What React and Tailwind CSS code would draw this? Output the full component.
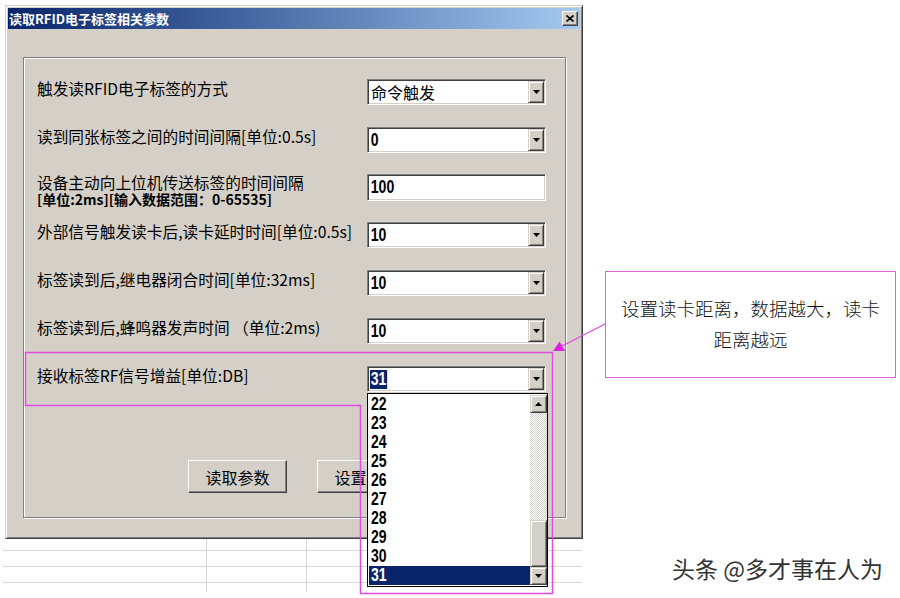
import React from "react";

const CJK = { fontFamily: '"Noto Sans CJK SC", "Noto Sans", sans-serif' };
const NUM = { fontFamily: '"Liberation Sans", Arial, sans-serif' };

function Num({ children, selected }) {
  return (
    <span
      className={
        "inline-block origin-left scale-x-[0.78] text-[18px] font-bold leading-[19px] px-[1px] " +
        (selected ? "bg-[#0a246a] text-white" : "text-black")
      }
      style={NUM}
    >
      {children}
    </span>
  );
}

function DropBtn() {
  return (
    <div className="w-[16px] h-[22px] bg-[#d4d0c8] border border-t-[#d4d0c8] border-l-[#d4d0c8] border-b-[#404040] border-r-[#404040] shadow-[inset_1px_1px_0_#fff,inset_-1px_-1px_0_#808080] flex items-center justify-center">
      <svg width="7" height="4" viewBox="0 0 7 4">
        <path d="M0 0H7L3.5 4Z" fill="#000" />
      </svg>
    </div>
  );
}

function Sunken({ children, tall }) {
  return (
    <div
      className={
        "w-[179px] bg-white border border-t-[#808080] border-l-[#808080] border-b-white border-r-white shadow-[inset_1px_1px_0_#404040,inset_-1px_-1px_0_#d4d0c8] flex items-center justify-between pl-[2px] pr-[1px] " +
        (tall ? "h-[27px]" : "h-[26px]")
      }
    >
      {children}
    </div>
  );
}

function Combo({ value, cjk, selected }) {
  return (
    <Sunken>
      {cjk ? (
        <span className="text-[16px] leading-[20px] text-black pl-[1px]" style={CJK}>
          {value}
        </span>
      ) : (
        <Num selected={selected}>{value}</Num>
      )}
      <DropBtn />
    </Sunken>
  );
}

function Label({ children }) {
  return (
    <div className="w-[330px] text-[15.7px] leading-[18px] text-black -mt-[6px] whitespace-nowrap" style={CJK}>
      {children}
    </div>
  );
}

function Button({ children }) {
  return (
    <div
      className="w-[99px] h-[33px] bg-[#d4d0c8] border border-t-white border-l-white border-b-[#404040] border-r-[#404040] shadow-[inset_-1px_-1px_0_#808080] flex items-center justify-center text-[16px] text-black"
      style={CJK}
    >
      {children}
    </div>
  );
}

export default function App() {
  const items = [22, 23, 24, 25, 26, 27, 28, 29, 30, 31];
  return (
    <div className="relative w-[900px] h-[598px] bg-white overflow-hidden">
      {/* Dialog window */}
      <div className="ml-[5px] mt-[5px] w-[578px] h-[534px] bg-[#d4d0c8] border border-t-[#d4d0c8] border-l-[#d4d0c8] border-b-[#404040] border-r-[#404040] shadow-[inset_1px_1px_0_#fff,inset_-1px_-1px_0_#808080] p-[2px] flex flex-col">
        {/* Title bar */}
        <div className="h-[21px] bg-gradient-to-r from-[#0a246a] to-[#a6caf0] flex items-center justify-between pl-[1px] pr-[2px]">
          <span className="text-[13px] font-bold text-white leading-[16px]" style={CJK}>
            读取RFID电子标签相关参数
          </span>
          <div className="w-[16px] h-[15px] bg-[#d4d0c8] border border-t-white border-l-white border-b-[#404040] border-r-[#404040] shadow-[inset_-1px_-1px_0_#808080] flex items-center justify-center">
            <svg width="8" height="7" viewBox="0 0 8 7">
              <path d="M0.5 0.5L7.5 6.5M7.5 0.5L0.5 6.5" stroke="#000" strokeWidth="1.7" />
            </svg>
          </div>
        </div>
        {/* Body */}
        <div className="pl-[15px] pt-[28px]">
          <div className="w-[543px] h-[461px] border border-[#808080] shadow-[inset_1px_1px_0_#fff,1px_1px_0_#fff] pl-[13px] pt-[21px] flex flex-col">
            <div className="flex items-center h-[26px]">
              <Label>触发读RFID电子标签的方式</Label>
              <Combo value="命令触发" cjk />
            </div>
            <div className="flex items-center h-[26px] mt-[22px]">
              <Label>读到同张标签之间的时间间隔[单位:0.5s]</Label>
              <Combo value="0" />
            </div>
            <div className="flex items-start h-[27px] mt-[21px]">
              <div className="w-[330px] text-black whitespace-nowrap" style={CJK}>
                <div className="text-[15.7px] leading-[17px]">设备主动向上位机传送标签的时间间隔</div>
                <div className="text-[14px] font-bold leading-[16px]">[单位:2ms][输入数据范围：0-65535]</div>
              </div>
              <Sunken tall>
                <Num>100</Num>
              </Sunken>
            </div>
            <div className="flex items-center h-[26px] mt-[21px]">
              <Label>外部信号触发读卡后,读卡延时时间[单位:0.5s]</Label>
              <Combo value="10" />
            </div>
            <div className="flex items-center h-[26px] mt-[22px]">
              <Label>标签读到后,继电器闭合时间[单位:32ms]</Label>
              <Combo value="10" />
            </div>
            <div className="flex items-center h-[26px] mt-[22px]">
              <Label>标签读到后,蜂鸣器发声时间 （单位:2ms)</Label>
              <Combo value="10" />
            </div>
            <div className="flex items-center h-[26px] mt-[22px]">
              <Label>接收标签RF信号增益[单位:DB]</Label>
              <Combo value="31" selected />
            </div>
            <div className="flex gap-[30px] mt-[68px] ml-[151px]">
              <Button>读取参数</Button>
              <Button>设置参数</Button>
            </div>
          </div>
        </div>
      </div>

      {/* spreadsheet grid below */}
      <div className="ml-[3px] w-[579px] grid grid-cols-[204px_100px_1fr]">
        {[12, 16, 16, 9].map((h, r) =>
          [0, 1, 2].map((c) => (
            <div
              key={r + "-" + c}
              className={
                (h === 12 ? "h-[12px] " : h === 16 ? "h-[16px] " : "h-[9px] ") +
                (r < 3 ? "border-b border-b-[#d6d6d6] " : "") +
                (c < 2 ? "border-r border-r-[#d6d6d6]" : "")
              }
            />
          ))
        )}
      </div>

      {/* Open dropdown list */}
      <div className="absolute left-[367px] top-[393px] w-[181px] h-[194px] bg-white border border-black flex">
        <div className="flex-1 pt-[1px] pl-[1px] flex flex-col">
          {items.map((n) => (
            <div
              key={n}
              className={"h-[19px] pl-[2px] flex items-center " + (n === 31 ? "bg-[#0a246a]" : "")}
            >
              <span
                className={
                  "inline-block origin-left scale-x-[0.78] text-[18px] font-bold leading-[19px] " +
                  (n === 31 ? "text-white" : "text-black")
                }
                style={NUM}
              >
                {n}
              </span>
            </div>
          ))}
        </div>
        <div className="w-[17px] flex flex-col pt-[1px] pb-[1px]">
          <div className="h-[18px] bg-[#d4d0c8] border border-t-[#d4d0c8] border-l-[#d4d0c8] border-b-[#404040] border-r-[#404040] shadow-[inset_1px_1px_0_#fff,inset_-1px_-1px_0_#808080] flex items-center justify-center">
            <svg width="7" height="4" viewBox="0 0 7 4">
              <path d="M0 4H7L3.5 0Z" fill="#000" />
            </svg>
          </div>
          <div className="h-[108px] bg-[repeating-conic-gradient(#d4d0c8_0_25%,#ffffff_0_50%)] bg-[length:2px_2px]" />
          <div className="h-[47px] bg-[#d4d0c8] border border-t-[#d4d0c8] border-l-[#d4d0c8] border-b-[#404040] border-r-[#404040] shadow-[inset_1px_1px_0_#fff,inset_-1px_-1px_0_#808080]" />
          <div className="h-[18px] bg-[#d4d0c8] border border-t-[#d4d0c8] border-l-[#d4d0c8] border-b-[#404040] border-r-[#404040] shadow-[inset_1px_1px_0_#fff,inset_-1px_-1px_0_#808080] flex items-center justify-center">
            <svg width="7" height="4" viewBox="0 0 7 4">
              <path d="M0 0H7L3.5 4Z" fill="#000" />
            </svg>
          </div>
        </div>
      </div>

      {/* annotation outline and arrow */}
      <svg className="absolute left-0 top-0 pointer-events-none" width="900" height="598" viewBox="0 0 900 598">
        <path
          d="M25.5 352.5H552.5V593.5H360.5V405.5H25.5Z"
          fill="none"
          stroke="#e04ce0"
          strokeWidth="1.5"
        />
        <line x1="605" y1="324" x2="562" y2="346" stroke="#e04ce0" strokeWidth="1.3" />
        <path d="M553 351L559.5 341.5L565 351Z" fill="#e020e0" />
      </svg>

      {/* callout */}
      <div className="absolute left-[605px] top-[271px] w-[291px] h-[107px] bg-white border-[1.5px] border-[#e05ce0] flex flex-col items-center pt-[21px]">
        <div className="text-[18.5px] leading-[31px] text-[#111] text-center font-light" style={CJK}>
          设置读卡距离，数据越大，读卡
          <br />
          距离越远
        </div>
      </div>

      {/* watermark */}
      <div
        className="absolute left-[672px] top-[553px] text-[23px] leading-[30px] text-[#333] [text-shadow:1px_1px_1px_#fff,-1px_-1px_1px_#fff]"
        style={CJK}
      >
        头条 @多才事在人为
      </div>
    </div>
  );
}
